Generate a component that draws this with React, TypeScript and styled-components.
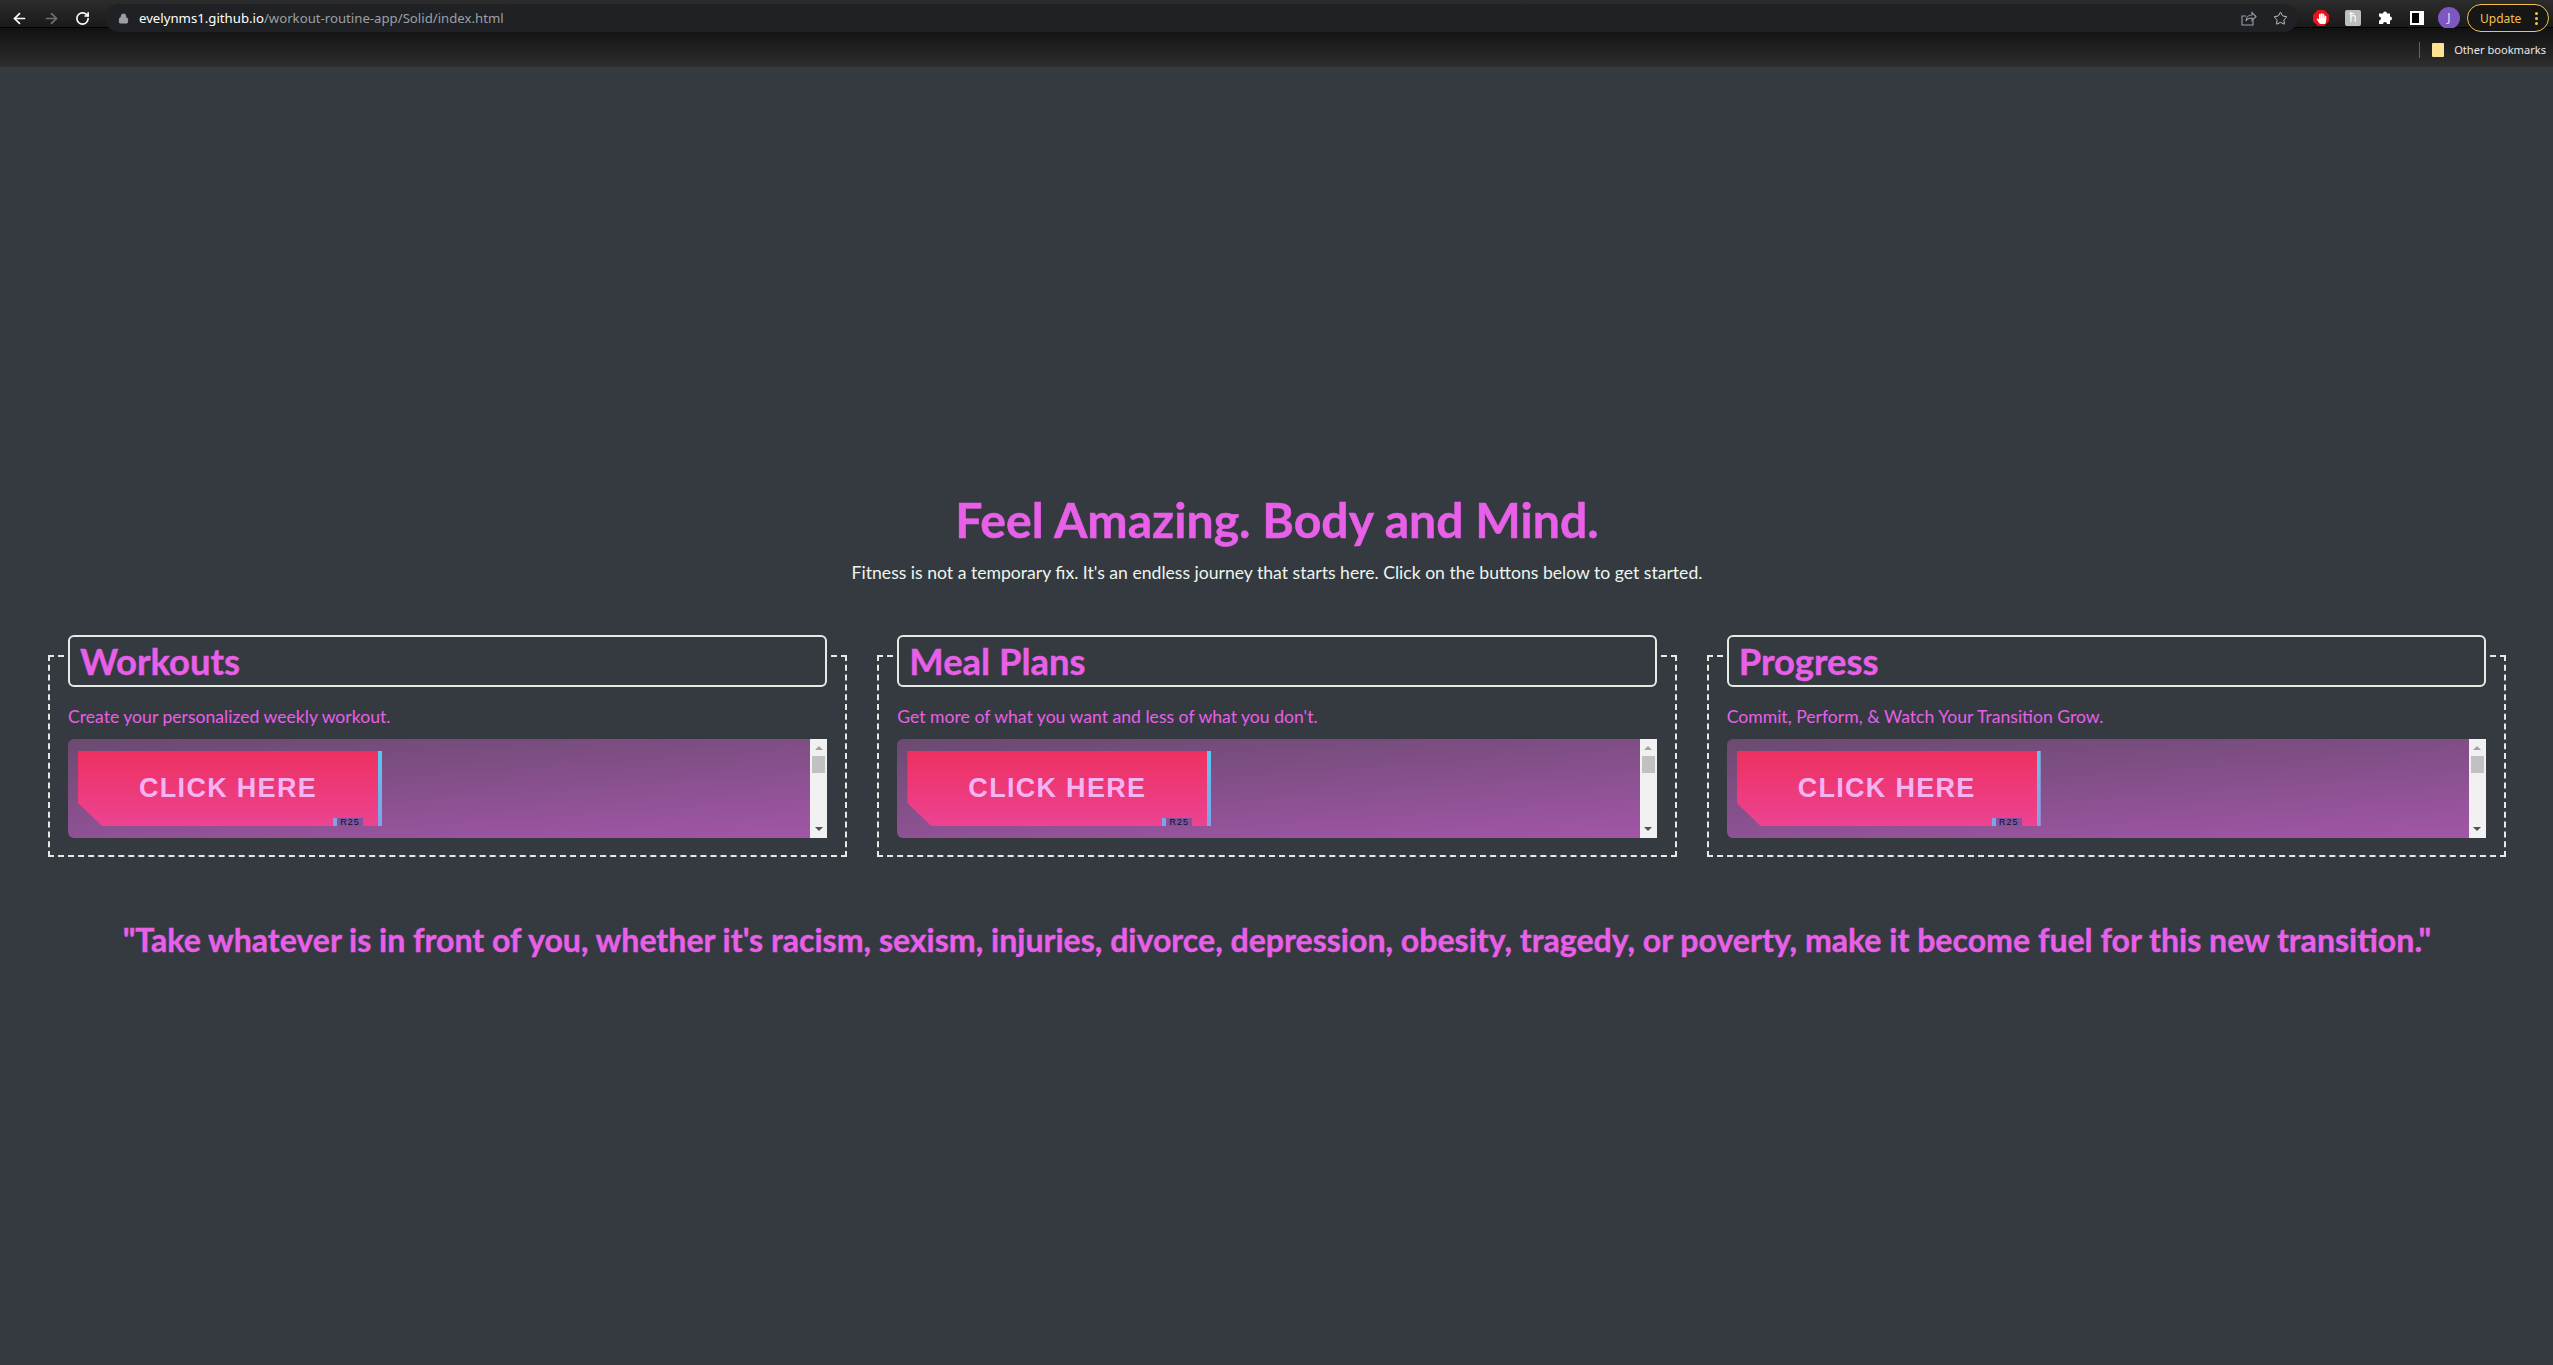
import styled, { createGlobalStyle } from "styled-components";
import { ArrowLeft, ArrowRight, RotateCw, Lock, Star } from "lucide-react";
import { FaHandPaper } from "react-icons/fa";

const cards = [
  { title: "Workouts", text: "Create your personalized weekly workout." },
  { title: "Meal Plans", text: "Get more of what you want and less of what you don't." },
  { title: "Progress", text: "Commit, Perform, & Watch Your Transition Grow." }
];

export default function App() {
  return (
    <Page>
      <GlobalStyle />
      <BrowserChrome>
        <Toolbar>
          <NavButtons>
            <ArrowLeft size={17} color="#fff" strokeWidth={2.4} />
            <ArrowRight size={17} color="#6f7174" strokeWidth={2.4} />
            <RotateCw size={15} color="#fff" strokeWidth={2.6} />
          </NavButtons>
          <Omnibox>
            <Lock size={11} color="#9aa0a6" fill="#9aa0a6" />
            <Url>
              <b>evelynms1.github.io</b>/workout-routine-app/Solid/index.html
            </Url>
            <OmniboxActions>
              <svg width="16" height="15" viewBox="0 0 16 15" fill="none" stroke="#9aa0a6" strokeWidth="1.1">
                <path d="M12 9v5H1V5h4" />
                <path d="M5 10c0-4 3-6 6-6V1.500l4 4-4 4V7c-3 0-5 1-6 3z" />
              </svg>
              <Star size={15} color="#c4c7ca" strokeWidth={1.6} />
            </OmniboxActions>
          </Omnibox>
          <Extensions>
            <ExtensionSlot>
              <HandBadge>
                <FaHandPaper size={11} color="#fff" />
              </HandBadge>
            </ExtensionSlot>
            <ExtensionSlot>
              <GreyExtension>ħ</GreyExtension>
            </ExtensionSlot>
            <ExtensionSlot>
              <svg width="15" height="15" viewBox="0 0 15 15">
                <path fill="#fff" d="M5 2.500a2 2 0 0 1 4 0H12v3a2 2 0 0 1 0 4v3.500H9a2 2 0 0 0-4 0H1v-3.500a2 2 0 0 0 0-4V2.500z" />
              </svg>
            </ExtensionSlot>
            <ExtensionSlot>
              <SidePanelIcon />
            </ExtensionSlot>
            <ExtensionSlot>
              <Avatar>J</Avatar>
            </ExtensionSlot>
            <UpdatePill>
              Update
              <svg width="3" height="13" viewBox="0 0 3 13" fill="#f4c24c">
                <circle cx="1.500" cy="1.500" r="1.500" />
                <circle cx="1.500" cy="6.500" r="1.500" />
                <circle cx="1.500" cy="11.500" r="1.500" />
              </svg>
            </UpdatePill>
          </Extensions>
        </Toolbar>
        <BookmarksBar>
          <BarDivider />
          <FolderIcon />
          <span>Other bookmarks</span>
        </BookmarksBar>
      </BrowserChrome>
      <Main>
        <Title>Feel Amazing. Body and Mind.</Title>
        <Intro>
          Fitness is not a temporary fix. It's an endless journey that starts here. Click on the buttons below to get
          started.
        </Intro>
        <Columns>
          {cards.map((card) => (
            <Card key={card.title}>
              <CardLegend>
                <LegendBox>{card.title}</LegendBox>
              </CardLegend>
              <CardText>{card.text}</CardText>
              <Frame>
                <FrameBody>
                  <ClickButton>
                    CLICK HERE
                    <Badge>R25</Badge>
                  </ClickButton>
                </FrameBody>
                <Scrollbar>
                  <ArrowUp />
                  <Thumb />
                  <ArrowDown />
                </Scrollbar>
              </Frame>
            </Card>
          ))}
        </Columns>
        <Quote>
          "Take whatever is in front of you, whether it's racism, sexism, injuries, divorce, depression, obesity,
          tragedy, or poverty, make it become fuel for this new transition."
        </Quote>
      </Main>
    </Page>
  );
}

const GlobalStyle = createGlobalStyle`
  html, body {
    margin: 0;
    padding: 0;
    background: #343a40;
    overflow: hidden;
  }
`;

const Page = styled.div`
  width: 2553px;
  height: 1365px;
  display: flex;
  flex-direction: column;
  background: #343a40;
  font-family: Lato, "Open Sans", sans-serif;
`;

const BrowserChrome = styled.header`
  flex: none;
  height: 68px;
  display: flex;
  flex-direction: column;
  border-bottom: 1px solid #3a3b3d;
  box-sizing: border-box;
  font-family: "Noto Sans", sans-serif;
`;

const Toolbar = styled.div`
  height: 28px;
  padding: 4px 0 0 0;
  box-sizing: border-box;
  display: flex;
  align-items: flex-start;
  background: linear-gradient(#2c2c2c, #1a1a1a);
  border-bottom: 1px solid #000;
`;

const NavButtons = styled.div`
  width: 105px;
  height: 28px;
  padding-left: 11px;
  box-sizing: border-box;
  display: flex;
  align-items: center;
  gap: 15px;
`;

const Omnibox = styled.div`
  width: 2193px;
  height: 28px;
  padding: 0 0 0 13px;
  box-sizing: border-box;
  display: flex;
  align-items: center;
  background: #202124;
  border-radius: 14px;
  position: relative;
  z-index: 1;
`;

const Url = styled.div`
  margin-left: 10px;
  font-size: 13.2px;
  color: #9aa0a6;
  b {
    font-weight: 400;
    color: #fff;
  }
`;

const OmniboxActions = styled.div`
  margin-left: auto;
  padding-right: 10px;
  display: flex;
  align-items: center;
  gap: 16px;
`;

const Extensions = styled.div`
  flex: 1;
  height: 28px;
  padding-left: 7px;
  display: flex;
  align-items: center;
  box-sizing: border-box;
`;

const ExtensionSlot = styled.div`
  flex: none;
  width: 32px;
  display: flex;
  justify-content: center;
`;

const HandBadge = styled.div`
  width: 16px;
  height: 16px;
  display: flex;
  align-items: center;
  justify-content: center;
  background: #e4141c;
  clip-path: polygon(30% 0, 70% 0, 100% 30%, 100% 70%, 70% 100%, 30% 100%, 0 70%, 0 30%);
`;

const GreyExtension = styled.div`
  width: 16px;
  height: 16px;
  background: #bdbdbd;
  border-radius: 2px;
  color: #fff;
  font-size: 12px;
  line-height: 16px;
  text-align: center;
`;

const SidePanelIcon = styled.div`
  width: 14px;
  height: 14px;
  box-sizing: border-box;
  background: #000;
  border: 2px solid #fff;
  border-right-width: 5px;
`;

const Avatar = styled.div`
  width: 22px;
  height: 22px;
  border-radius: 50%;
  background: #7e57c2;
  color: #e8e0f4;
  font-size: 12px;
  line-height: 22px;
  text-align: center;
`;

const UpdatePill = styled.div`
  width: 82px;
  height: 28px;
  margin-left: 2px;
  box-sizing: border-box;
  padding: 0 10px 0 12px;
  display: flex;
  align-items: center;
  justify-content: space-between;
  border: 1px solid #f4c24c;
  border-radius: 14px;
  background: #161616;
  color: #f4c24c;
  font-size: 12px;
  position: relative;
  z-index: 1;
`;

const BookmarksBar = styled.div`
  flex: 1;
  padding: 4px 7px 0 0;
  display: flex;
  align-items: center;
  justify-content: flex-end;
  background: linear-gradient(#111, #2e2e2e);
  color: #e8eaed;
  font-size: 11.1px;
`;

const BarDivider = styled.div`
  width: 1px;
  height: 16px;
  background: #5f6368;
  margin-right: 12px;
`;

const FolderIcon = styled.div`
  width: 12px;
  height: 14px;
  border-radius: 1px;
  background: #fde293;
  margin-right: 10px;
`;

const Main = styled.main`
  flex: 1;
  padding: 425px 47px 0 48px;
  display: flex;
  flex-direction: column;
  align-items: stretch;
`;

const Title = styled.h1`
  margin: 0;
  height: 54px;
  font-size: 48.2px;
  line-height: 52px;
  font-weight: 700;
  -webkit-text-stroke: 0.5px #e85fe8;
  text-align: center;
  color: #e85fe8;
`;

const Intro = styled.p`
  margin: 13px 0 0;
  height: 24px;
  font-size: 17.6px;
  line-height: 25px;
  text-align: center;
  color: #eef5ee;
`;

const Columns = styled.div`
  margin-top: 51px;
  display: grid;
  grid-template-columns: repeat(3, 1fr);
  column-gap: 30px;
`;

const Card = styled.fieldset`
  margin: 0;
  min-width: 0;
  height: 222px;
  padding: 0 18px;
  box-sizing: border-box;
  border: 2px dashed #e4ebe4;
`;

const CardLegend = styled.legend`
  width: 100%;
  height: 42px;
  padding: 0;
`;

const LegendBox = styled.div`
  height: 52px;
  padding: 0 10px;
  box-sizing: border-box;
  font-size: 36.4px;
  line-height: 49px;
  font-weight: 700;
  -webkit-text-stroke: 0.4px #e85fe8;
  color: #e85fe8;
  border: 2px solid #e4ebe4;
  border-radius: 6px;
`;

const CardText = styled.p`
  margin: 28px 0 0;
  height: 24px;
  font-size: 17.6px;
  line-height: 24px;
  color: #e85fe8;
`;

const Frame = styled.div`
  margin-top: 10px;
  height: 99px;
  display: flex;
  border-radius: 6px 0 0 6px;
  overflow: hidden;
`;

const FrameBody = styled.div`
  flex: 1;
  padding: 12px 10px;
  box-sizing: border-box;
  background: linear-gradient(176deg, #6b4a70, #a256a8);
`;

const ClickButton = styled.button`
  position: relative;
  display: block;
  width: 304px;
  height: 75px;
  padding: 0 0 0 61px;
  box-sizing: border-box;
  border: 0;
  border-right: 4px solid #5cc4ef;
  border-image: linear-gradient(#58c8f0, #7fa3e8) 1;
  background: linear-gradient(#ee3060, #ec4392);
  clip-path: polygon(0 0, 100% 0, 100% 100%, 24px 100%, 0 52px);
  color: #f6b3f2;
  font-family: "Liberation Sans", Arial, sans-serif;
  font-size: 27px;
  font-weight: 700;
  letter-spacing: 1.3px;
  text-align: left;
`;

const Badge = styled.span`
  position: absolute;
  right: 15px;
  bottom: 0;
  width: 30px;
  height: 8px;
  padding-left: 4px;
  box-sizing: border-box;
  background: linear-gradient(to right, #7fa3e8 4px, #80559e 4px);
  color: #160c28;
  font-size: 9px;
  line-height: 8px;
  font-weight: 400;
  letter-spacing: 1px;
  text-align: center;
`;

const Scrollbar = styled.div`
  flex: none;
  width: 17px;
  padding: 7px 2px;
  box-sizing: border-box;
  display: flex;
  flex-direction: column;
  align-items: center;
  background: #f1f1f1;
`;

const ArrowUp = styled.div`
  width: 0;
  height: 0;
  border: 4px solid transparent;
  border-top: 0;
  border-bottom: 4px solid #a3a3a3;
`;

const Thumb = styled.div`
  width: 13px;
  height: 17px;
  margin-top: 6px;
  background: #c1c1c1;
`;

const ArrowDown = styled.div`
  width: 0;
  height: 0;
  margin-top: auto;
  border: 4px solid transparent;
  border-bottom: 0;
  border-top: 4px solid #505050;
`;

const Quote = styled.h2`
  margin: 63px 0 0;
  font-size: 32.1px;
  line-height: 40px;
  font-weight: 700;
  -webkit-text-stroke: 0.4px #e85fe8;
  text-align: center;
  color: #e85fe8;
`;
